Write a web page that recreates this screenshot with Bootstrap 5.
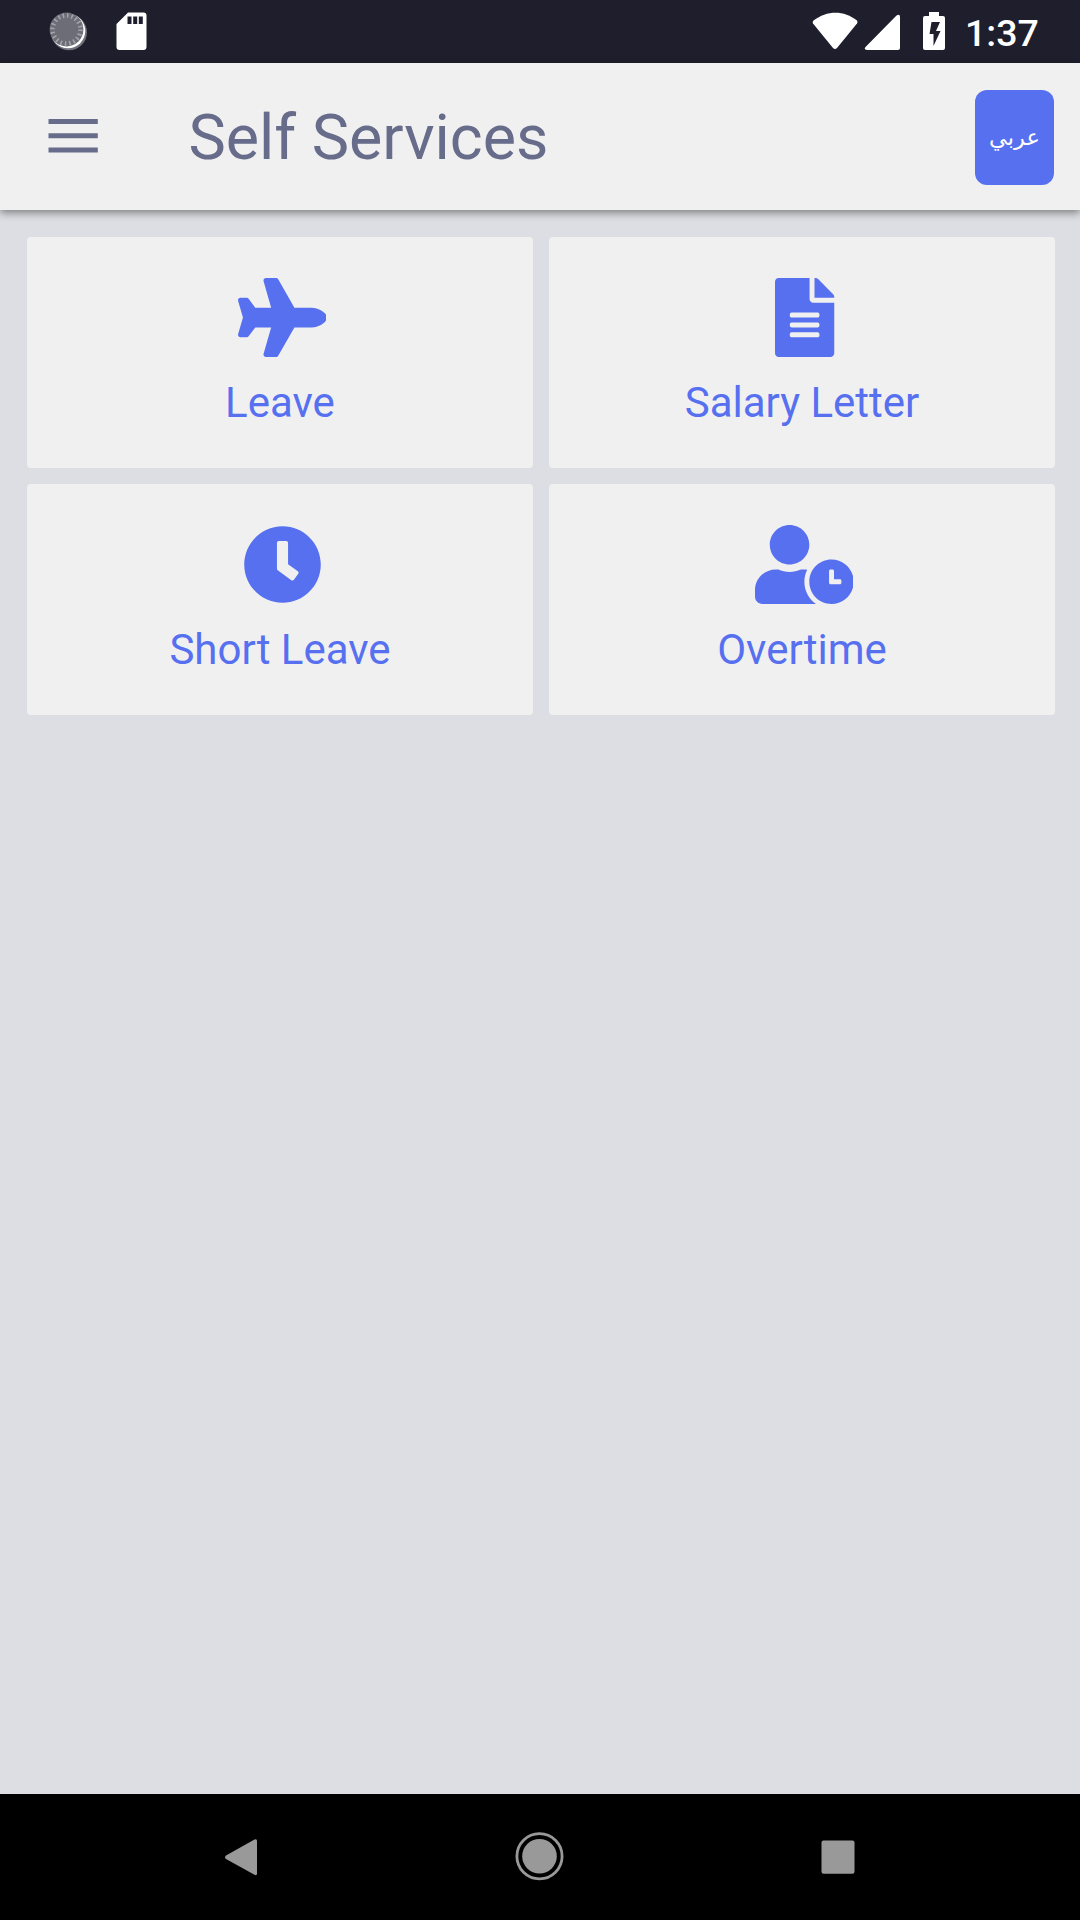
<!DOCTYPE html>
<html lang="en">
<head>
<meta charset="utf-8">
<meta name="viewport" content="width=device-width, initial-scale=1">
<title>Self Services</title>
<link href="https://cdn.jsdelivr.net/npm/bootstrap@5.3.0/dist/css/bootstrap.min.css" rel="stylesheet">
<script src="https://cdn.jsdelivr.net/npm/bootstrap@5.3.0/dist/js/bootstrap.bundle.min.js" defer></script>
<style>
  body { font-family: Roboto, "Liberation Sans", sans-serif; background: #dddee3; }
  svg { display: block; flex: none; }
  .status-bar { height: 63px; background: #1e1e2c; color: #fff; }
  .clock-text { font-size: 37.5px; font-weight: 500; line-height: 44px; padding-top: 11px; margin-left: 19px; width: 115px; }
  .app-bar { height: 147px; background: #f0f0f0; padding: 0 26px 0 48px; box-shadow: 0 3px 8px rgba(0,0,0,.42); z-index: 2; }
  .menu-icon { margin-bottom: 2px; }
  .app-title { font-size: 62.8px; line-height: 74px; color: #676c8b; margin-left: 89.500px; padding-top: 2px; }
  .lang-btn { width: 79px; height: 95px; margin-top: 1px; border-radius: 12px; border: 0; background: #5770f0; color: #fff; font-family: "DejaVu Sans", sans-serif; font-size: 22.500px; line-height: 30px; padding: 0; }
  .tile-area { padding: 27px 25px 0 27px; }
  .tile-grid { --bs-gutter-x: 16px; --bs-gutter-y: 16px; }
  .tile { height: 231px; background: #f0f0f0; border: 0; border-radius: 4px; color: #5770f0; padding-top: 41px; text-decoration: none; }
  .tile svg { height: 79px; margin-left: 4px; fill: currentColor; }
  .tile .doc-icon { margin-left: 6px; }
  .tile-label { font-size: 42px; line-height: 50px; margin-top: 21px; }
  .nav-keys { height: 126px; background: #000; padding-left: 225px; }
</style>
</head>
<body class="vh-100 d-flex flex-column overflow-hidden">
  <div class="status-bar d-flex align-items-start flex-shrink-0">
    <svg class="ms-5" width="42" height="63" viewBox="48 0 42 63">
      <circle cx="69" cy="32.3" r="18" fill="#71727b"/>
      <circle cx="68" cy="31" r="17.3" fill="#fff"/>
      <circle cx="66.5" cy="29.5" r="16.9" fill="#6c6d76"/>
      <circle cx="66.5" cy="29.5" r="14" fill="none" stroke="#a2a3aa" stroke-width="4.5" stroke-dasharray="1.6 2.8"/>
    </svg>
    <svg width="58" height="63" viewBox="90 0 58 63">
      <path fill="#fff" fill-rule="evenodd" d="M128 12.5h15.500q3 0 3 3V47q0 3-3 3h-24q-3 0-3-3V24zM127.500 16.500v7.500h4v-7.500zm5.700 0v7.500h4v-7.500zm5.600 0v7.500h4v-7.500z"/>
    </svg>
    <svg class="ms-auto" width="46" height="63" viewBox="812 0 46 63"><path fill="#fff" d="M813.500 20.500C827 10 844 10 857 20.500q1 1.500 0 3L837 48q-2 2-4 0L813 23.500q-1-1.500.5-3z"/></svg>
    <svg width="43" height="63" viewBox="858 0 43 63"><path fill="#fff" d="M866 46.500 896.500 15.500Q900 13.500 900 17V48q0 2-2 2H867q-4-.5-1-3.500z"/></svg>
    <svg width="45" height="63" viewBox="901 0 45 63"><path fill="#fff" fill-rule="evenodd" d="M929 12h10v4h4q2 0 2 2v30q0 2-2 2h-18q-2 0-2-2V18q0-2 2-2h4zM931.500 22l-2 12h4v12l7-15h-4.500l4-9z"/></svg>
    <div class="clock-text">1:37</div>
  </div>

  <header class="app-bar d-flex align-items-center flex-shrink-0 position-relative">
    <svg class="menu-icon" width="51" height="36" viewBox="0 0 51 36" fill="#676c8b"><path d="M.5 1h49.300v5H.5zM.5 15.200h49.300v5H.5zM.5 29.500h49.300v5H.5z"/></svg>
    <div class="app-title">Self Services</div>
    <button class="lang-btn ms-auto" type="button" lang="ar">عربي</button>
  </header>

  <main class="tile-area flex-grow-1">
    <div class="row row-cols-2 tile-grid">
      <div class="col">
        <a class="tile card align-items-center" href="#">
          <svg viewBox="0 0 576 512"><path d="M480 192H365.710L260.610 8.060A16.014 16.014 0 0 0 246.710 0h-65.500c-10.630 0-18.300 10.170-15.380 20.390L214.860 192H112l-43.200-57.600c-3.020-4.030-7.770-6.400-12.800-6.400H16.010C5.600 128-2.040 137.780.49 147.880L32 256 .49 364.120C-2.040 374.220 5.600 384 16.010 384H56c5.040 0 9.780-2.370 12.800-6.400L112 320h102.860l-49.030 171.600c-2.920 10.220 4.750 20.400 15.380 20.400h65.500c5.740 0 11.040-3.080 13.890-8.060L365.710 320H480c35.350 0 96-28.650 96-64s-60.650-64-96-64z"/></svg>
          <div class="tile-label">Leave</div>
        </a>
      </div>
      <div class="col">
        <a class="tile card align-items-center" href="#">
          <svg class="doc-icon" viewBox="0 0 384 512"><path d="M224 136V0H24C10.700 0 0 10.700 0 24v464c0 13.300 10.700 24 24 24h336c13.300 0 24-10.700 24-24V160H248c-13.200 0-24-10.800-24-24zm64 236c0 6.600-5.400 12-12 12H108c-6.600 0-12-5.400-12-12v-8c0-6.600 5.400-12 12-12h168c6.600 0 12 5.400 12 12v8zm0-64c0 6.600-5.400 12-12 12H108c-6.600 0-12-5.400-12-12v-8c0-6.600 5.400-12 12-12h168c6.600 0 12 5.400 12 12v8zm0-72v8c0 6.600-5.400 12-12 12H108c-6.600 0-12-5.400-12-12v-8c0-6.600 5.400-12 12-12h168c6.600 0 12 5.400 12 12zm96-114.100v6.100H256V0h6.100c6.400 0 12.500 2.500 17 7l97.900 98c4.500 4.500 7 10.600 7 16.900z"/></svg>
          <div class="tile-label">Salary Letter</div>
        </a>
      </div>
      <div class="col">
        <a class="tile card align-items-center" href="#">
          <svg viewBox="0 0 512 512"><path d="M256 8C119 8 8 119 8 256s111 248 248 248 248-111 248-248S393 8 256 8zm57.100 350.100L224.900 294c-3.100-2.300-4.900-5.900-4.900-9.700V116c0-6.600 5.400-12 12-12h48c6.600 0 12 5.400 12 12v137.700l63.500 46.200c5.400 3.900 6.500 11.400 2.600 16.800l-28.200 38.800c-3.900 5.300-11.400 6.500-16.800 2.600z"/></svg>
          <div class="tile-label">Short Leave</div>
        </a>
      </div>
      <div class="col">
        <a class="tile card align-items-center" href="#">
          <svg viewBox="0 0 640 512"><path d="M496 224c-79.600 0-144 64.400-144 144s64.400 144 144 144 144-64.400 144-144-64.400-144-144-144zm64 150.300c0 5.300-4.400 9.700-9.700 9.700h-60.600c-5.300 0-9.700-4.400-9.700-9.700v-76.600c0-5.300 4.400-9.700 9.700-9.700h12.600c5.300 0 9.700 4.400 9.700 9.700V352h38.300c5.300 0 9.700 4.400 9.700 9.700v12.600zM320 368c0-27.800 6.700-54.100 18.200-77.500-8-1.500-16.200-2.500-24.600-2.500h-16.700c-22.200 10.200-46.900 16-72.900 16s-50.600-5.800-72.900-16h-16.700C60.200 288 0 348.200 0 422.400V464c0 26.500 21.500 48 48 48h347.100c-45.300-31.900-75.100-84.500-75.100-144zm-96-112c70.700 0 128-57.300 128-128S294.700 0 224 0 96 57.300 96 128s57.300 128 128 128z"/></svg>
          <div class="tile-label">Overtime</div>
        </a>
      </div>
    </div>
  </main>

  <nav class="nav-keys d-flex align-items-center flex-shrink-0">
    <svg width="630" height="126" viewBox="225 1794 630 126" fill="#999">
      <path d="M254.500 1839.600Q257 1838.500 257 1841v32.500q0 2.500-2.500 1.200L226 1859q-2-1.800 0-3.600z"/>
      <circle cx="539.500" cy="1856.200" r="22.600" fill="none" stroke="#999" stroke-width="2.800"/>
      <circle cx="539.500" cy="1856.200" r="17.300"/>
      <rect x="821.500" y="1840.500" width="33" height="33.300" rx="2"/>
    </svg>
  </nav>
</body>
</html>
